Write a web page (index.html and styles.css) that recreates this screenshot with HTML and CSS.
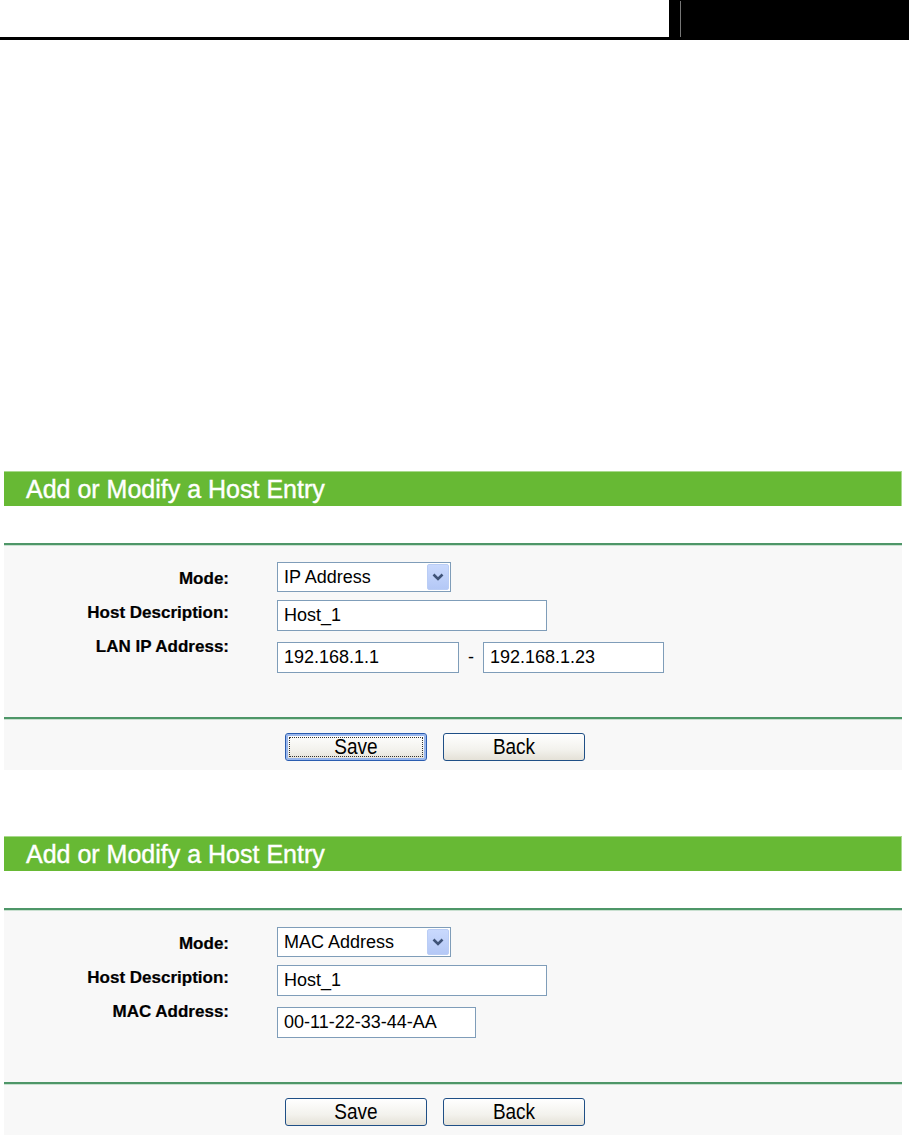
FILE: index.html
```html
<!DOCTYPE html>
<html lang="en">
<head>
    <meta charset="UTF-8">
    <meta name="viewport" content="width=device-width, initial-scale=1.0">
    <title>Add or Modify a Host Entry</title>
    <link rel="stylesheet" href="styles.css">
</head>
<body>
    <div class="topbar">
        <div class="topbar-rule"></div>
        <div class="topbar-block"><div class="topbar-line"></div></div>
    </div>

    <!-- IP address mode -->
    <div class="panel panel-first">
        <div class="panel-head">Add or Modify a Host Entry</div>
        <div class="panel-body">
            <div class="divider top"></div>
            <div class="row row-mode">
                <label>Mode:</label>
                <div class="select">
                    <span class="select-text">IP Address</span>
                    <span class="drop">
                        <svg width="12" height="8" viewBox="0 0 12 8"><path d="M1.5 1.5 L6 6 L10.5 1.5" fill="none" stroke="#3f5378" stroke-width="2.6"/></svg>
                    </span>
                </div>
            </div>
            <div class="row row-desc">
                <label>Host Description:</label>
                <input class="field field-desc" type="text" value="Host_1">
            </div>
            <div class="row row-addr">
                <label>LAN IP Address:</label>
                <div class="range">
                    <input class="field field-ip" type="text" value="192.168.1.1">
                    <span class="dash">-</span>
                    <input class="field field-ip2" type="text" value="192.168.1.23">
                </div>
            </div>
            <div class="divider bottom"></div>
            <div class="buttons">
                <button class="btn focused"><span>Save</span></button>
                <button class="btn"><span>Back</span></button>
            </div>
        </div>
    </div>

    <!-- MAC address mode -->
    <div class="panel panel-second">
        <div class="panel-head">Add or Modify a Host Entry</div>
        <div class="panel-body">
            <div class="divider top"></div>
            <div class="row row-mode">
                <label>Mode:</label>
                <div class="select">
                    <span class="select-text">MAC Address</span>
                    <span class="drop">
                        <svg width="12" height="8" viewBox="0 0 12 8"><path d="M1.5 1.5 L6 6 L10.5 1.5" fill="none" stroke="#3f5378" stroke-width="2.6"/></svg>
                    </span>
                </div>
            </div>
            <div class="row row-desc">
                <label>Host Description:</label>
                <input class="field field-desc" type="text" value="Host_1">
            </div>
            <div class="row row-addr">
                <label>MAC Address:</label>
                <input class="field field-mac" type="text" value="00-11-22-33-44-AA">
            </div>
            <div class="divider bottom"></div>
            <div class="buttons">
                <button class="btn"><span>Save</span></button>
                <button class="btn"><span>Back</span></button>
            </div>
        </div>
    </div>
</body>
</html>
```

FILE: styles.css
```css
body {
    margin: 0;
    background: #fff;
    font-family: "Liberation Sans", Arial, sans-serif;
    color: #000;
}
.topbar {
    display: flex;
    height: 40px;
}
.topbar-rule {
    flex: 1;
    height: 37px;
    border-bottom: 3px solid #000;
}
.topbar-block {
    width: 240px;
    height: 40px;
    background: #000;
}
.topbar-line {
    margin: 1px 0 0 11px;
    width: 1px;
    height: 36px;
    background: #777;
}
.panel {
    width: 898px;
    margin-left: 4px;
}
.panel-first {
    margin-top: 431px;
}
.panel-second {
    margin-top: 66px;
}
.panel-head {
    box-sizing: border-box;
    height: 35px;
    line-height: 34px;
    padding-left: 22px;
    background: #67b934;
    border-top: 1px solid #a8d98c;
    border-right: 1px solid #a8d98c;
    color: #fff;
    font-size: 25px;
    -webkit-text-stroke: 0.4px #fff;
}
.panel-body {
    background: #f8f8f8;
    padding-bottom: 9px;
}
.divider {
    height: 2px;
    background: #4e9668;
    border-bottom: 1px solid #c9e0d0;
}
.divider.top {
    margin-top: 37px;
}
.divider.bottom {
    margin-top: 44px;
}
.row {
    display: grid;
    grid-template-columns: 225px auto;
    column-gap: 48px;
    align-items: start;
}
.row label {
    text-align: right;
    font-weight: bold;
    font-size: 17px;
    line-height: 20px;
    -webkit-text-stroke: 0.2px #000;
}
.row-mode {
    margin-top: 16px;
}
.row-mode label {
    margin-top: 7px;
}
.row-desc {
    margin-top: 8px;
}
.row-desc label {
    margin-top: 3px;
}
.row-addr {
    margin-top: 11px;
}
.row-addr label {
    margin-top: -5px;
}
.field {
    box-sizing: border-box;
    height: 31px;
    border: 1px solid #7f9db9;
    background: #fff;
    padding: 0 6px;
    margin: 0;
    font-family: "Liberation Sans", Arial, sans-serif;
    font-size: 18px;
    color: #000;
}
.field-desc {
    width: 270px;
}
.field-ip {
    width: 182px;
}
.field-ip2 {
    width: 181px;
}
.field-mac {
    width: 199px;
}
.range {
    display: flex;
    align-items: center;
}
.dash {
    margin: 0 9px;
    font-size: 18px;
}
.select {
    box-sizing: border-box;
    width: 174px;
    height: 30px;
    border: 1px solid #7f9db9;
    background: #fff;
    display: flex;
    align-items: center;
    justify-content: space-between;
    padding: 0 1px 0 6px;
    font-size: 18px;
}
.drop {
    box-sizing: border-box;
    width: 22px;
    height: 26px;
    border: 1px solid #bacdf5;
    border-radius: 2px;
    background: linear-gradient(#c9d9fd, #b4c8f6);
    display: flex;
    align-items: center;
    justify-content: center;
}
.buttons {
    display: flex;
    gap: 16px;
    padding-left: 281px;
    margin-top: 13px;
}
.btn {
    box-sizing: border-box;
    width: 142px;
    height: 28px;
    padding: 0;
    border: 1px solid #1f4f86;
    border-radius: 3px;
    background: linear-gradient(#ffffff, #f3f2ed 60%, #e4e1d7);
    font-family: "Liberation Sans", Arial, sans-serif;
    font-size: 19px;
    color: #000;
    display: flex;
    align-items: center;
    justify-content: center;
}
.btn span {
    display: inline-block;
    transform: scaleY(1.12);
}
.btn.focused {
    border-color: #2a5cb0;
    box-shadow: inset 0 0 0 2px #9ab7ec;
    outline: 1px dotted #333;
    outline-offset: -5px;
}
```
